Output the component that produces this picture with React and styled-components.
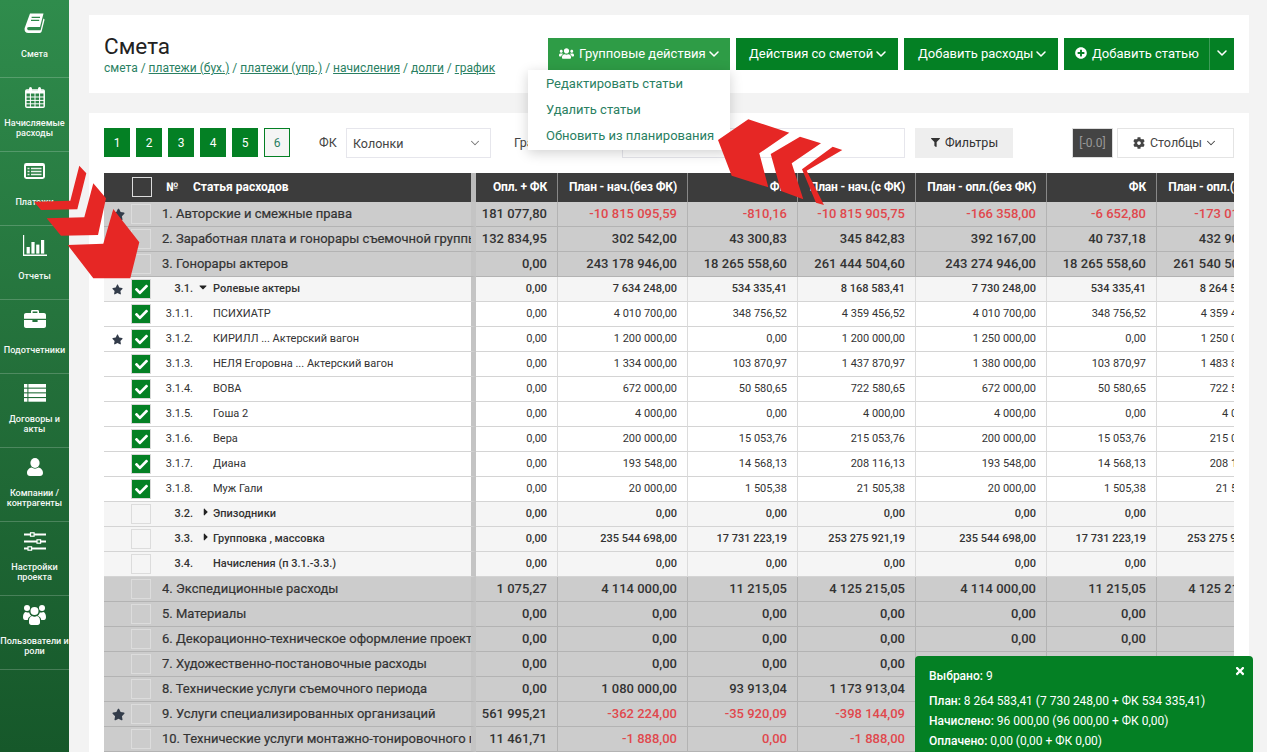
import React from "react";
import styled, { createGlobalStyle } from "styled-components";
import { ChevronDown } from "lucide-react";
import {
  FaUsers,
  FaPlusCircle,
  FaCog,
  FaFilter,
  FaStar,
  FaCheck,
  FaCaretDown,
  FaCaretRight,
  FaTimes,
} from "react-icons/fa";

const GREEN = "#048024";
const LINK = "#2a7f62";

const GlobalStyle = createGlobalStyle`
  html, body {
    margin: 0;
    height: 100%;
    overflow: hidden;
    background: #f3f3f3;
    font-family: Roboto, "Noto Sans", sans-serif;
    color: #333;
  }
  #root { height: 100%; }
  * { box-sizing: border-box; }
  td, th { padding: 0; }
`;

const Page = styled.div`
  position: relative;
  display: flex;
  height: 752px;
  overflow: hidden;
`;

const Sidebar = styled.nav`
  flex: 0 0 69px;
  background: linear-gradient(180deg, #2f8c4c 0%, #236f3a 50%, #16582a 100%);
  color: #fff;
`;

const NavItem = styled.a`
  display: flex;
  flex-direction: column;
  align-items: center;
  height: ${(p) => (p.$first ? "78px" : "74px")};
  padding-top: ${(p) => (p.$first ? "4px" : "0")};
  border-bottom: 1px solid rgba(255, 255, 255, 0.2);
`;

const NavIcon = styled.div`
  height: 38px;
  display: flex;
  align-items: center;
  justify-content: center;
`;

const NavLabel = styled.div`
  height: 24px;
  width: 69px;
  display: flex;
  align-items: center;
  justify-content: center;
  text-align: center;
  font-size: 9.1px;
  font-weight: 500;
  line-height: 10.5px;
  color: #f4f8f5;
  white-space: pre;
`;

const Main = styled.main`
  flex: 1;
  min-width: 0;
  padding: 15px 18px 0 20px;
`;

const HeaderPanel = styled.header`
  position: relative;
  z-index: 2;
  display: flex;
  justify-content: space-between;
  height: 78px;
  padding: 18px 15px 0;
  background: #fff;
`;

const Title = styled.h1`
  margin: 0;
  font-size: 22.5px;
  font-weight: 400;
  line-height: 26px;
  color: #222;
`;

const Crumbs = styled.div`
  margin-top: 1px;
  font-size: 12px;
  line-height: 16px;
  color: ${LINK};
`;

const CrumbLink = styled.a`
  color: ${LINK};
  text-decoration: ${(p) => (p.$plain ? "none" : "underline")};
`;

const ButtonRow = styled.div`
  display: flex;
  gap: 6px;
  margin-top: 5px;
  height: 32px;
`;

const ActionWrap = styled.div`
  position: relative;
  display: flex;
`;

const ActionButton = styled.button`
  display: inline-flex;
  align-items: center;
  width: ${(p) => p.$width}px;
  height: 32px;
  padding: 0 0 2px ${(p) => p.$pad || 13}px;
  border: 0;
  background: ${(p) => (p.$active ? "#2e9c46" : GREEN)};
  color: #fff;
  font: 400 13px Roboto, sans-serif;
  white-space: nowrap;
`;

const SplitToggle = styled(ActionButton)`
  width: 25px;
  padding: 0 0 2px;
  justify-content: center;
  border-left: 1px solid #3d9c58;
`;

const LeadIcon = styled.span`
  display: inline-flex;
  margin-right: 5px;
`;

const Chevron = styled(ChevronDown).attrs({ size: 16, strokeWidth: 2.3 })`
  margin-top: 1px;
  flex: none;
`;

const SmallChevron = styled(ChevronDown).attrs({ size: 14, strokeWidth: 1.8 })`
  flex: none;
  margin-left: ${(p) => (p.$tight ? "-3px" : "0")};
`;

const Menu = styled.div`
  position: absolute;
  top: 32px;
  right: 0;
  width: 202px;
  height: 80px;
  padding-top: 1px;
  background: #fff;
  box-shadow: 0 3px 12px rgba(0, 0, 0, 0.18);
`;

const MenuItem = styled.div`
  height: 26px;
  padding-left: 18px;
  font-size: 13px;
  line-height: 26px;
  color: ${LINK};
  white-space: nowrap;
`;

const BodyPanel = styled.section`
  margin-top: 20px;
  padding: 15px 15px 0;
  height: 639px;
  background: #fff;
  overflow: hidden;
`;

const Toolbar = styled.div`
  display: flex;
  align-items: flex-start;
  height: 30px;
  margin-bottom: 15px;
`;

const Steps = styled.div`
  display: flex;
  gap: 6px;
`;

const Step = styled.div`
  width: 26px;
  height: 29px;
  display: flex;
  align-items: center;
  justify-content: center;
  font-size: 12px;
  background: ${(p) => (p.$outline ? "#f5f5f5" : GREEN)};
  color: ${(p) => (p.$outline ? LINK : "#fff")};
  border: 1px solid ${GREEN};
`;

const FieldLabel = styled.label`
  width: ${(p) => p.$width}px;
  margin-left: ${(p) => p.$left}px;
  font-size: 12.5px;
  line-height: 30px;
  white-space: nowrap;
  color: #444;
`;

const Field = styled.div`
  display: flex;
  align-items: center;
  justify-content: space-between;
  width: ${(p) => p.$width}px;
  height: 30px;
  padding: 0 8px 0 6px;
  border: 1px solid #e6e6ec;
  font-size: 12.5px;
  color: #444;
`;

const FilterButton = styled.button`
  display: flex;
  align-items: center;
  justify-content: center;
  gap: 5px;
  width: 98px;
  height: 30px;
  margin-left: 10px;
  padding: 0 0 1px 1px;
  border: 0;
  background: #eee;
  color: #333;
  font: 400 12.5px Roboto, sans-serif;
`;

const VersionTag = styled.div`
  width: 41px;
  height: 30px;
  margin-left: auto;
  border: 1px solid #ddd;
  background: #444;
  color: #999;
  font-size: 12px;
  line-height: 28px;
  text-align: center;
`;

const ColumnsButton = styled.button`
  display: flex;
  align-items: center;
  justify-content: center;
  gap: 5px;
  width: 117px;
  height: 30px;
  margin-left: 4px;
  padding: 0 0 1px;
  border: 1px solid #e4e4e4;
  background: #fff;
  color: #444;
  font: 400 12.5px Roboto, sans-serif;
`;

const TableWrap = styled.div`
  width: 1130px;
  overflow: hidden;
`;

const Table = styled.table`
  table-layout: fixed;
  width: 1171px;
  border-collapse: separate;
  border-spacing: 0;
`;

const HeadCell = styled.th`
  height: 29px;
  padding: 0 ${(p) => (p.$num ? "10px" : "0")} 2px ${(p) => p.$left || 0}px;
  background: #3c3c3c;
  color: #fff;
  font-size: 12px;
  font-weight: 700;
  letter-spacing: ${(p) => (p.$num ? "-0.15px" : "0")};
  text-align: ${(p) => (p.$num ? "right" : "left")};
  white-space: nowrap;
  overflow: hidden;
  border-right: ${(p) => (p.$num ? "1px solid #888" : "0")};
  ${(p) => p.$split && "border-right: 5px solid #bbb;"}
`;

const rowStyles = {
  top: { bg: "#ccc", line: "#b3b3b3", size: "13px", weight: 500 },
  group: { bg: "#f5f5f5", line: "#d4d4d4", size: "11px", weight: 500 },
  leaf: { bg: "#fff", line: "#d4d4d4", size: "11px", weight: 400 },
};

const Row = styled.tr`
  & > td {
    height: 25px;
    background: ${(p) => rowStyles[p.$kind].bg};
    border-bottom: 1px solid ${(p) => rowStyles[p.$kind].line};
    font-size: ${(p) => rowStyles[p.$kind].size};
    font-weight: ${(p) => rowStyles[p.$kind].weight};
    white-space: nowrap;
    overflow: hidden;
  }
`;

const StarCell = styled.td`
  padding-right: ${(p) => (p.$big ? "6px" : "8px")};
  text-align: right;
  color: #333c4a;
  line-height: 0;
`;

const CheckBox = styled.span`
  display: flex;
  align-items: center;
  justify-content: center;
  width: 20px;
  height: 20px;
  margin-left: ${(p) => (p.$dark ? "1px" : "0")};
  border: 1px solid ${(p) => (p.$on ? "#d8d8d8" : "#dcdcdc")};
  background: ${(p) => (p.$on ? GREEN : "transparent")};
  color: #fff;
  font-size: 13px;
`;

const CodeCell = styled.td`
  padding-bottom: 2px;
  text-align: right;
`;

const NameCell = styled.td`
  padding: 0 0 2px ${(p) => (p.$wide ? "0" : "4px")};
  border-right: 5px solid #c4c4c4;
`;

const NameText = styled.span`
  font-weight: 400;
  -webkit-text-stroke: 0.2px #333;
`;

const Caret = styled.span`
  display: inline-block;
  width: 16px;
  padding-left: ${(p) => (p.$side ? "3px" : "0")};
  vertical-align: -1px;
  color: #222;
  font-size: 12px;
  line-height: 1;
`;

const NumCell = styled.td`
  padding: 0 10px 2px 0;
  text-align: right;
  color: ${(p) => (p.$red ? "#e0484d" : "inherit")};
  border-right: 1px solid ${(p) => (p.$kind === "top" ? "#b3b3b3" : "#dcdcdc")};
`;

const SummaryBox = styled.aside`
  position: absolute;
  right: 14px;
  bottom: 0;
  z-index: 4;
  width: 338px;
  height: 96px;
  padding: 10px 14px;
  border-radius: 4px 4px 0 0;
  background: ${GREEN};
  color: #fff;
  font-size: 12px;
  line-height: 20px;
`;

const SummaryHead = styled.div`
  margin-bottom: 5px;
`;

const SummaryKey = styled.span`
  font-weight: 500;
`;

const CloseMark = styled.span`
  position: absolute;
  top: 9px;
  right: 7px;
  font-size: 12px;
  line-height: 1;
`;

const ArrowLayer = styled.svg`
  position: absolute;
  top: 0;
  left: 0;
  z-index: 3;
  pointer-events: none;
`;

// sidebar glyphs, the font icon set of the original is not available
const icons = {
  book: (
    <svg width="21" height="20" viewBox="0 0 21 20" fill="#fff">
      <path d="M6 0.5H19.5L16 14H5C3.4 14 3 15 3.2 15.9C3.4 16.8 4.2 17.2 5.4 17.2H16.6L19.4 5.6L20.6 6.6L17.6 18.6C17.4 19.4 16.7 20 15.8 20H4.4C1.6 20 0.2 18 0.6 15.2Z" />
      <path d="M7.6 4.4H16M7 7.4H15.2" stroke="#2f8a4b" strokeWidth="1.4" />
    </svg>
  ),
  calendar: (
    <svg width="20" height="21" viewBox="0 0 20 21" fill="none" stroke="#fff">
      <rect x="0.8" y="3" width="18.4" height="17.2" rx="1" strokeWidth="1.5" />
      <path d="M1 5H19" strokeWidth="3" />
      <path d="M5.4 6V20M10 6V20M14.6 6V20M1 10H19M1 13.4H19M1 16.8H19" strokeWidth="1" />
      <rect x="4" y="0" width="3" height="5.4" rx="1.5" fill="#fff" stroke="none" />
      <rect x="13" y="0" width="3" height="5.4" rx="1.5" fill="#fff" stroke="none" />
    </svg>
  ),
  payments: (
    <svg width="21" height="16" viewBox="0 0 21 16">
      <rect width="21" height="16" rx="2.4" fill="#fff" />
      <rect x="2" y="3" width="17" height="11" fill="#2a7e43" />
      <path d="M3.5 5.5H5.5M7 5.5H17.5M3.5 8.5H5.5M7 8.5H17.5M3.5 11.5H5.5M7 11.5H17.5" stroke="#e8f2ea" strokeWidth="1.3" />
    </svg>
  ),
  chart: (
    <svg width="24" height="21" viewBox="0 0 24 21" fill="#fff">
      <path d="M0 0H1.2V19.6H24V21H0Z" />
      <rect x="3.6" y="12" width="3.2" height="6.6" />
      <rect x="8.4" y="7" width="3.2" height="11.6" />
      <rect x="13.2" y="9.6" width="3.2" height="9" />
      <rect x="18" y="5" width="3.2" height="13.6" />
    </svg>
  ),
  case: (
    <svg width="22" height="18" viewBox="0 0 22 18" fill="#fff">
      <path d="M7 3V1.4C7 .6 7.6 0 8.4 0H13.6C14.4 0 15 .6 15 1.4V3H20C21.1 3 22 3.9 22 5V8.8H0V5C0 3.9 .9 3 2 3ZM8.6 1.6V3H13.4V1.6Z" />
      <path d="M0 10H8.4V12H13.6V10H22V16C22 17.1 21.1 18 20 18H2C.9 18 0 17.1 0 16Z" />
    </svg>
  ),
  list: (
    <svg width="22" height="18" viewBox="0 0 22 18" fill="#fff">
      {[0, 4.7, 9.4, 14.1].map((y) => (
        <g key={y}>
          <rect y={y} width="3.4" height="3.6" />
          <rect x="4.4" y={y} width="17.6" height="3.6" />
        </g>
      ))}
    </svg>
  ),
  user: (
    <svg width="16" height="18" viewBox="0 0 16 18" fill="#fff">
      <ellipse cx="8" cy="5" rx="4.6" ry="5" />
      <path d="M0 15C0 11.8 2.4 10 4.6 9.6C6.6 11 9.4 11 11.4 9.6C13.6 10 16 11.8 16 15C16 16.8 14.6 18 13 18H3C1.4 18 0 16.8 0 15Z" />
    </svg>
  ),
  sliders: (
    <svg width="22" height="19" viewBox="0 0 22 19" fill="#fff" stroke="#fff">
      <path d="M0 2.5H22M0 9.5H22M0 16.5H22" strokeWidth="2.2" />
      <rect x="6.5" y="0.8" width="3.6" height="3.4" fill="#21703a" strokeWidth="1.2" />
      <rect x="13" y="7.8" width="3.6" height="3.4" fill="#21703a" strokeWidth="1.2" />
      <rect x="4" y="14.8" width="3.6" height="3.4" fill="#21703a" strokeWidth="1.2" />
    </svg>
  ),
  users: (
    <svg width="23" height="20" viewBox="0 0 23 20" fill="#fff">
      <circle cx="4" cy="3" r="3" />
      <circle cx="19" cy="3" r="3" />
      <circle cx="11.5" cy="6" r="4" />
      <path d="M0 12C0 9 1.4 7 3 7C4 7.6 5 7.8 6.2 7.4C6.6 9 7.4 10 8.4 10.8C6.4 11.4 5 13 4.8 15H2C.8 15 0 14 0 12Z" />
      <path d="M23 12C23 9 21.6 7 20 7C19 7.6 18 7.8 16.8 7.4C16.4 9 15.6 10 14.6 10.8C16.6 11.4 18 13 18.2 15H21C22.2 15 23 14 23 12Z" />
      <path d="M6 15.6C6 13 7.4 11.2 9 11C10.4 12 12.6 12 14 11C15.6 11.2 17 13 17 15.6V17.6C17 19 16 20 14.6 20H8.4C7 20 6 19 6 17.6Z" />
    </svg>
  ),
};

const navItems = [
  ["book", "Смета"],
  ["calendar", "Начисляемые\nрасходы"],
  ["payments", "Платежи"],
  ["chart", "Отчеты"],
  ["case", "Подотчетники"],
  ["list", "Договоры и\nакты"],
  ["user", "Компании /\nконтрагенты"],
  ["sliders", "Настройки\nпроекта"],
  ["users", "Пользователи и\nроли"],
];

const columns = [
  ["Опл. + ФК", 82],
  ["План - нач.(без ФК)", 130],
  ["ФК", 110],
  ["План - нач.(с ФК)", 118],
  ["План - опл.(без ФК)", 131],
  ["ФК", 110],
  ["План - опл.(с ФК)", 118],
];

const zeros = ["0,00", "0,00", "0,00", "0,00", "0,00", "0,00", "0,00"];

const rows = [
  { kind: "top", star: true, name: "1. Авторские и смежные права", red: true, v: ["181 077,80", "-10 815 095,59", "-810,16", "-10 815 905,75", "-166 358,00", "-6 652,80", "-173 010,80"] },
  { kind: "top", name: "2. Заработная плата и гонорары съемочной группы", v: ["132 834,95", "302 542,00", "43 300,83", "345 842,83", "392 167,00", "40 737,18", "432 904,18"] },
  { kind: "top", name: "3. Гонорары актеров", v: ["0,00", "243 178 946,00", "18 265 558,60", "261 444 504,60", "243 274 946,00", "18 265 558,60", "261 540 504,60"] },
  { kind: "group", star: true, on: true, code: "3.1.", caret: "down", name: "Ролевые актеры", v: ["0,00", "7 634 248,00", "534 335,41", "8 168 583,41", "7 730 248,00", "534 335,41", "8 264 583,41"] },
  { kind: "leaf", on: true, code: "3.1.1.", name: "ПСИХИАТР", v: ["0,00", "4 010 700,00", "348 756,52", "4 359 456,52", "4 010 700,00", "348 756,52", "4 359 456,52"] },
  { kind: "leaf", star: true, on: true, code: "3.1.2.", name: "КИРИЛЛ ... Актерский вагон", v: ["0,00", "1 200 000,00", "0,00", "1 200 000,00", "1 250 000,00", "0,00", "1 250 000,00"] },
  { kind: "leaf", on: true, code: "3.1.3.", name: "НЕЛЯ Егоровна ... Актерский вагон", v: ["0,00", "1 334 000,00", "103 870,97", "1 437 870,97", "1 380 000,00", "103 870,97", "1 483 870,97"] },
  { kind: "leaf", on: true, code: "3.1.4.", name: "ВОВА", v: ["0,00", "672 000,00", "50 580,65", "722 580,65", "672 000,00", "50 580,65", "722 580,65"] },
  { kind: "leaf", on: true, code: "3.1.5.", name: "Гоша 2", v: ["0,00", "4 000,00", "0,00", "4 000,00", "4 000,00", "0,00", "4 000,00"] },
  { kind: "leaf", on: true, code: "3.1.6.", name: "Вера", v: ["0,00", "200 000,00", "15 053,76", "215 053,76", "200 000,00", "15 053,76", "215 053,76"] },
  { kind: "leaf", on: true, code: "3.1.7.", name: "Диана", v: ["0,00", "193 548,00", "14 568,13", "208 116,13", "193 548,00", "14 568,13", "208 116,13"] },
  { kind: "leaf", on: true, code: "3.1.8.", name: "Муж Гали", v: ["0,00", "20 000,00", "1 505,38", "21 505,38", "20 000,00", "1 505,38", "21 505,38"] },
  { kind: "group", code: "3.2.", caret: "right", name: "Эпизодники", v: zeros },
  { kind: "group", code: "3.3.", caret: "right", name: "Групповка , массовка", v: ["0,00", "235 544 698,00", "17 731 223,19", "253 275 921,19", "235 544 698,00", "17 731 223,19", "253 275 921,19"] },
  { kind: "group", code: "3.4.", caret: "none", name: "Начисления (п 3.1.-3.3.)", v: zeros },
  { kind: "top", name: "4. Экспедиционные расходы", v: ["1 075,27", "4 114 000,00", "11 215,05", "4 125 215,05", "4 114 000,00", "11 215,05", "4 125 215,05"] },
  { kind: "top", name: "5. Материалы", v: zeros },
  { kind: "top", name: "6. Декорационно-техническое оформление проекта", v: zeros },
  { kind: "top", name: "7. Художественно-постановочные расходы", v: zeros },
  { kind: "top", name: "8. Технические услуги съемочного периода", v: ["0,00", "1 080 000,00", "93 913,04", "1 173 913,04", "1 080 000,00", "93 913,04", "1 173 913,04"] },
  { kind: "top", star: true, name: "9. Услуги специализированных организаций", red: true, v: ["561 995,21", "-362 224,00", "-35 920,09", "-398 144,09", "-362 224,00", "-35 920,09", "-398 144,09"] },
  { kind: "top", name: "10. Технические услуги монтажно-тонировочного периода", red: true, v: ["11 461,71", "-1 888,00", "0,00", "-1 888,00", "-1 888,00", "0,00", "-1 888,00"] },
];

const arrows = [
  "79.3,165.7 86.3,173.3 77.3,209.3 41,210 34,201.7 70.3,200.7",
  "93.3,183.3 106,198.3 98,235 61,235.7 46.7,218.3 84.3,217.3",
  "113.3,209 139.3,242.3 130.3,278.3 93.3,278.3 67.7,245 103.3,243.7",
  "718,140 748.3,119.3 789.3,132.7 759.3,153.3 768.3,187.3 731.7,175.7",
  "770.7,154 800,136.7 821,143.3 791.7,163.3 803.3,199.3 781,191",
  "802,169.3 832.7,146.7 842.3,150 806.7,170.7 824,205 816,202.7",
];

const ItemRow = ({ row }) => {
  const top = row.kind === "top";
  return (
    <Row $kind={row.kind}>
      <StarCell $big={top}>{row.star && <FaStar size={top ? 13 : 11} />}</StarCell>
      <td>
        <CheckBox $on={row.on}>{row.on && <FaCheck />}</CheckBox>
      </td>
      {top ? (
        <NameCell colSpan={2} $wide>
          <NameText>{row.name}</NameText>
        </NameCell>
      ) : (
        <>
          <CodeCell>{row.code}</CodeCell>
          <NameCell>
            <Caret $side={row.caret === "right"}>
              {row.caret === "down" && <FaCaretDown />}
              {row.caret === "right" && <FaCaretRight />}
            </Caret>
            {row.name}
          </NameCell>
        </>
      )}
      {row.v.map((value, i) => (
        <NumCell key={i} $kind={row.kind} $red={row.red && i > 0}>
          {value}
        </NumCell>
      ))}
    </Row>
  );
};

const App = () => {
  return (
    <Page>
      <GlobalStyle />
      <Sidebar>
        {navItems.map(([icon, label], i) => (
          <NavItem key={icon} $first={i === 0}>
            <NavIcon>{icons[icon]}</NavIcon>
            <NavLabel>{label}</NavLabel>
          </NavItem>
        ))}
      </Sidebar>

      <Main>
        <HeaderPanel>
          <div>
            <Title>Смета</Title>
            <Crumbs>
              <CrumbLink $plain>смета</CrumbLink> / <CrumbLink>платежи (бух.)</CrumbLink> /{" "}
              <CrumbLink>платежи (упр.)</CrumbLink> / <CrumbLink>начисления</CrumbLink> /{" "}
              <CrumbLink>долги</CrumbLink> / <CrumbLink>график</CrumbLink>
            </Crumbs>
          </div>
          <ButtonRow>
            <ActionWrap>
              <ActionButton $active $pad={11} $width={182}>
                <LeadIcon>
                  <FaUsers size={15} />
                </LeadIcon>
                Групповые действия
                <Chevron />
              </ActionButton>
              <Menu>
                <MenuItem>Редактировать статьи</MenuItem>
                <MenuItem>Удалить статьи</MenuItem>
                <MenuItem>Обновить из планирования</MenuItem>
              </Menu>
            </ActionWrap>
            <ActionButton $width={162}>
              Действия со сметой
              <Chevron />
            </ActionButton>
            <ActionButton $width={154} $pad={14}>
              Добавить расходы
              <Chevron />
            </ActionButton>
            <ActionWrap>
              <ActionButton $pad={11} $width={145}>
                <LeadIcon>
                  <FaPlusCircle size={12} />
                </LeadIcon>
                Добавить статью
              </ActionButton>
              <SplitToggle>
                <ChevronDown size={16} strokeWidth={2.3} />
              </SplitToggle>
            </ActionWrap>
          </ButtonRow>
        </HeaderPanel>

        <BodyPanel>
          <Toolbar>
            <Steps>
              {[1, 2, 3, 4, 5, 6].map((n) => (
                <Step key={n} $outline={n === 6}>
                  {n}
                </Step>
              ))}
            </Steps>
            <FieldLabel $left={29} $width={27}>
              ФК
            </FieldLabel>
            <Field $width={145}>
              Колонки <SmallChevron color="#777" />
            </Field>
            <FieldLabel $left={23} $width={108}>
              График
            </FieldLabel>
            <Field $width={283} />
            <FilterButton>
              <FaFilter size={9} /> Фильтры
            </FilterButton>
            <VersionTag>[-0.0]</VersionTag>
            <ColumnsButton>
              <FaCog size={12} /> Столбцы <SmallChevron $tight />
            </ColumnsButton>
          </Toolbar>

          <TableWrap>
            <Table>
              <colgroup>
                <col style={{ width: 27 }} />
                <col style={{ width: 31 }} />
                <col style={{ width: 31 }} />
                <col style={{ width: 283 }} />
                {columns.map(([title, width], i) => (
                  <col key={i} style={{ width }} />
                ))}
              </colgroup>
              <thead>
                <tr>
                  <HeadCell />
                  <HeadCell>
                    <CheckBox $dark />
                  </HeadCell>
                  <HeadCell $left={4}>№</HeadCell>
                  <HeadCell $split>Статья расходов</HeadCell>
                  {columns.map(([title], i) => (
                    <HeadCell key={i} $num>
                      {title}
                    </HeadCell>
                  ))}
                </tr>
              </thead>
              <tbody>
                {rows.map((row) => (
                  <ItemRow key={row.name} row={row} />
                ))}
              </tbody>
            </Table>
          </TableWrap>
        </BodyPanel>
      </Main>

      <SummaryBox>
        <CloseMark>
          <FaTimes />
        </CloseMark>
        <SummaryHead>
          <SummaryKey>Выбрано:</SummaryKey> 9
        </SummaryHead>
        <div>
          <SummaryKey>План:</SummaryKey> 8 264 583,41 (7 730 248,00 + ФК 534 335,41)
        </div>
        <div>
          <SummaryKey>Начислено:</SummaryKey> 96 000,00 (96 000,00 + ФК 0,00)
        </div>
        <div>
          <SummaryKey>Оплачено:</SummaryKey> 0,00 (0,00 + ФК 0,00)
        </div>
      </SummaryBox>

      <ArrowLayer width="1267" height="752">
        {arrows.map((points) => (
          <polygon key={points} points={points} fill="#e62725" />
        ))}
      </ArrowLayer>
    </Page>
  );
};

export default App;
